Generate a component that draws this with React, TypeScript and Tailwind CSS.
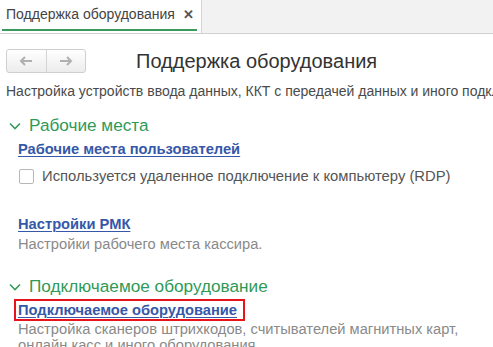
import React from 'react';

const font = { fontFamily: '"Liberation Sans", Arial, sans-serif' };

const Chevron = () => (
  <svg width="12" height="8" viewBox="0 0 12 8" className="shrink-0">
    <path d="M1 1.5 L6 6.5 L11 1.5" fill="none" stroke="#3a9a5e" strokeWidth="1.6" />
  </svg>
);

const Section = ({ title }: { title: string }) => (
  <div className="flex items-center gap-[8px] pl-[9px] h-[22px]">
    <Chevron />
    <span className="text-[17.2px] text-[#2f9a57] leading-none">{title}</span>
  </div>
);

const Link = ({ children }: { children: React.ReactNode }) => (
  <a href="#" className="text-[14.7px] font-bold text-[#3558a8] underline underline-offset-2 decoration-1 leading-none">
    {children}
  </a>
);

const App = () => {
  return (
    <div className="w-[493px] h-[347px] overflow-hidden bg-white text-[#333]" style={font}>
      {/* Tab bar */}
      <div className="flex h-[34px] bg-[#f2f2f2] border-b border-[#d0d0d0]">
        <div className="relative flex items-center gap-[8px] w-[202px] bg-white border-r border-[#d4d4d4] pl-[6px] pb-[4px]">
          <span className="text-[14px] text-[#444]">Поддержка оборудования</span>
          <span className="text-[13px] font-bold text-[#555]">✕</span>
          <div className="absolute left-[2px] right-[4px] bottom-[2px] h-[2px] bg-[#3a9a5e]" />
        </div>
      </div>

      {/* Header */}
      <div className="flex items-center h-[44px] pt-[9px] pl-[6px]">
        <div className="flex h-[24px] w-[80px] rounded-[3px] border border-[#cfcfcf] bg-gradient-to-b from-white to-[#ececec]">
          <div className="flex-1 flex items-center justify-center border-r border-[#d4d4d4]">
            <svg width="14" height="10" viewBox="0 0 14 10">
              <path d="M13 5 H2 M6 1 L2 5 L6 9" fill="none" stroke="#b0b0b0" strokeWidth="2" />
            </svg>
          </div>
          <div className="flex-1 flex items-center justify-center">
            <svg width="14" height="10" viewBox="0 0 14 10">
              <path d="M1 5 H12 M8 1 L12 5 L8 9" fill="none" stroke="#b0b0b0" strokeWidth="2" />
            </svg>
          </div>
        </div>
        <h1 className="ml-[50px] text-[20px] text-[#333] whitespace-nowrap">Поддержка оборудования</h1>
      </div>

      <p className="mt-[4px] pl-[6px] text-[14px] leading-[18px] text-[#4a4a4a] whitespace-nowrap">
        Настройка устройств ввода данных, ККТ с передачей данных и иного подключаемого оборудования.
      </p>

      <div className="mt-[15px]">
        <Section title="Рабочие места" />
        <div className="pl-[18px] mt-[4px] h-[16px] flex items-center">
          <Link>Рабочие места пользователей</Link>
        </div>
        <div className="flex items-center gap-[8px] pl-[19px] mt-[10px]">
          <span className="w-[15px] h-[15px] border border-[#b8b8b8] rounded-[2px] bg-white" />
          <span className="text-[14.8px] leading-[18px] text-[#555] whitespace-nowrap">Используется удаленное подключение к компьютеру (RDP)</span>
        </div>
        <div className="pl-[18px] mt-[31px] h-[16px] flex items-center">
          <Link>Настройки РМК</Link>
        </div>
        <p className="pl-[18px] mt-[3px] text-[14.7px] leading-[18px] text-[#8a8a8a] whitespace-nowrap">Настройки рабочего места кассира.</p>
      </div>

      <div className="mt-[23px]">
        <Section title="Подключаемое оборудование" />
        <div className="ml-[14px] mt-[1px] w-[231px] h-[22px] border-2 border-[#e8141c] flex items-center pl-[2px]">
          <Link>Подключаемое оборудование</Link>
        </div>
        <p className="pl-[18px] mt-0 text-[14.7px] leading-[16px] text-[#8a8a8a] w-[475px]">
          Настройка сканеров штрихкодов, считывателей магнитных карт, онлайн касс и иного оборудования.
        </p>
      </div>
    </div>
  );
};

export default App;
